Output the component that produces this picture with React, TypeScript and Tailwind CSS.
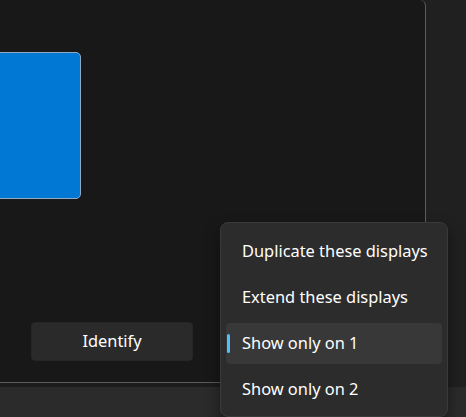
const MENU_ITEMS = [
  { label: "Duplicate these displays", selected: false },
  { label: "Extend these displays", selected: false },
  { label: "Show only on 1", selected: true },
  { label: "Show only on 2", selected: false },
];

export default function App() {
  return (
    <div
      className="relative h-[417px] w-[466px] overflow-hidden bg-[#202020] text-white"
      style={{ fontFamily: '"Noto Sans", "Open Sans", sans-serif' }}
    >
      <div className="flex h-[383px] w-[426px] flex-col rounded-tr-[6px] border-r border-b border-[#5c5c5c] bg-[#181818]">
        {/* display canvas */}
        <div className="relative h-[322px]">
          <div className="absolute left-[-12px] top-[52px] h-[147px] w-[93px] rounded-[5px] border border-[#8fa9c4] bg-[#0078d4]" />
        </div>
        <div className="flex pl-[31px]">
          <button className="flex h-[39px] w-[162px] items-center justify-center rounded-[4px] border border-[#262626] bg-[#2a2a2a] text-[16.4px] text-white">
            Identify
          </button>
        </div>
      </div>
      <div className="h-[4px] w-[426px] bg-[#1c1c1c]" />
      <div className="h-full bg-[#2b2b2b]" />

      {/* dropdown menu */}
      <div className="absolute left-[220px] top-[222px] flex w-[228px] flex-col gap-[5px] rounded-[8px] border border-[#3a3a3a] bg-[#2c2c2c] px-[5px] pt-[8px] pb-[6px] shadow-[0_8px_16px_rgba(0,0,0,0.45)]">
        {MENU_ITEMS.map((item) => (
          <div
            key={item.label}
            className={`relative flex h-[41px] items-center rounded-[4px] pl-[16px] text-[16.4px] ${
              item.selected ? "bg-[#383838]" : ""
            }`}
          >
            {item.selected && (
              <span className="absolute left-[1px] top-[11px] h-[19px] w-[3px] rounded-full bg-[#4cc2ff]" />
            )}
            {item.label}
          </div>
        ))}
      </div>
    </div>
  );
}
